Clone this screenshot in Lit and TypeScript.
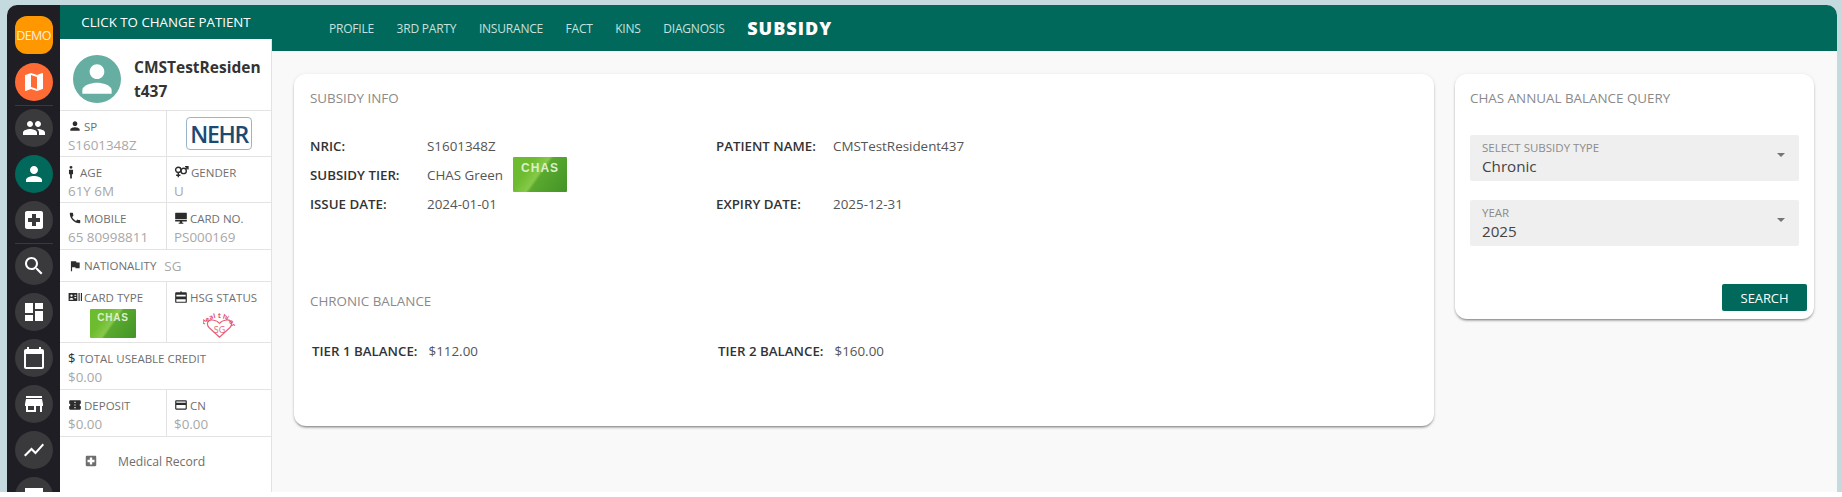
import { LitElement, html, css, svg } from "lit";
import { customElement } from "lit/decorators.js";

const P: Record<string, string> = {
  map: "M20.5 3l-.16.03L15 5.1 9 3 3.36 4.9c-.21.07-.36.25-.36.48V20.5c0 .28.22.5.5.5l.16-.03L9 18.9l6 2.1 5.64-1.9c.21-.07.36-.25.36-.48V3.5c0-.28-.22-.5-.5-.5zM15 19l-6-2.11V5l6 2.11V19z",
  people: "M16 11c1.66 0 2.99-1.34 2.99-3S17.66 5 16 5c-1.66 0-3 1.34-3 3s1.34 3 3 3zm-8 0c1.66 0 2.99-1.34 2.99-3S9.66 5 8 5C6.34 5 5 6.34 5 8s1.34 3 3 3zm0 2c-2.33 0-7 1.17-7 3.5V19h14v-2.5c0-2.33-4.67-3.5-7-3.5zm8 0c-.29 0-.62.02-.97.05 1.16.84 1.97 1.97 1.97 3.45V19h6v-2.5c0-2.33-4.67-3.5-7-3.5z",
  person: "M12 12c2.21 0 4-1.79 4-4s-1.79-4-4-4-4 1.79-4 4 1.79 4 4 4zm0 2c-2.67 0-8 1.34-8 4v2h16v-2c0-2.66-5.33-4-8-4z",
  hospital: "M19 3H5c-1.1 0-1.99.9-1.99 2L3 19c0 1.1.9 2 2 2h14c1.1 0 2-.9 2-2V5c0-1.1-.9-2-2-2zm-1 11h-4v4h-4v-4H6v-4h4V6h4v4h4v4z",
  search: "M15.5 14h-.79l-.28-.27C15.41 12.59 16 11.11 16 9.5 16 5.91 13.09 3 9.5 3S3 5.91 3 9.5 5.91 16 9.5 16c1.61 0 3.09-.59 4.23-1.57l.27.28v.79l5 4.99L20.49 19l-4.99-5zm-6 0C7.01 14 5 11.99 5 9.5S7.01 5 9.5 5 14 7.01 14 9.5 11.99 14 9.5 14z",
  dashboard: "M3 13h8V3H3v10zm0 8h8v-6H3v6zm10 0h8V11h-8v10zm0-18v6h8V3h-8z",
  calendar: "M20 3h-1V1h-2v2H7V1H5v2H4c-1.1 0-2 .9-2 2v16c0 1.1.9 2 2 2h16c1.1 0 2-.9 2-2V5c0-1.1-.9-2-2-2zm0 18H4V8h16v13z",
  store: "M20 4H4v2h16V4zm1 10v-2l-1-5H4l-1 5v2h1v6h10v-6h4v6h2v-6h1zm-9 4H6v-4h6v4z",
  chart: "M3.5 18.49l6-6.01 4 4L22 6.92l-1.41-1.41-7.09 7.97-4-4L2 16.99z",
  receipt: "M3 4h18v16H3zM5 8v10h14V8z",
  call: "M20.01 15.38c-1.23 0-2.42-.2-3.53-.56-.35-.12-.74-.03-1.01.24l-1.57 1.97c-2.83-1.35-5.48-3.9-6.89-6.83l1.95-1.66c.27-.28.35-.67.24-1.02-.37-1.11-.56-2.3-.56-3.53 0-.54-.45-.99-.99-.99H4.19C3.65 3 3 3.24 3 3.99 3 13.28 10.73 21 20.01 21c.71 0 .99-.63.99-1.18v-3.45c0-.54-.45-.99-.99-.99z",
  flag: "M14.4 6L14 4H5v17h2v-7h5.6l.4 2h7V6z",
  ticket: "M22 10V6c0-1.11-.9-2-2-2H4c-1.1 0-1.99.89-1.99 2v4c1.1 0 1.99.9 1.99 2s-.89 2-2 2v4c0 1.1.9 2 2 2h16c1.1 0 2-.9 2-2v-4c-1.1 0-2-.9-2-2s.9-2 2-2zm-9 7.5h-2v-2h2v2zm0-4.5h-2v-2h2v2zm0-4.5h-2v-2h2v2z",
  cn: "M20 4H4c-1.11 0-1.99.89-1.99 2L2 18c0 1.11.89 2 2 2h16c1.11 0 2-.89 2-2V6c0-1.11-.89-2-2-2zm0 14H4v-6h16v6zm0-10H4V6h16v2z",
  desktop: "M3 3h18c.6 0 1 .4 1 1v10H2V4c0-.6.4-1 1-1zM2 15.500h20V18H14v2h2v2H8v-2h2v-2H2z",
  age: "M12 1.500a2.500 2.500 0 1 1 0 5 2.500 2.500 0 0 1 0-5zM8.500 8h7v8h-2v7h-3v-7h-2z",
  cardtype: "M1 5h15v14H1zM6 7.500a2 2 0 1 0 0 4 2 2 0 0 0 0-4zM3 16.500h6v-1.200c0-1-2-1.800-3-1.800s-3 .8-3 1.800zM11 8v2h3V8zm0 4v2h3v-2zM18 5h2v14h-2zM22 5h2v14h-2z",
  hsg: "M11 2h2v2h7a2 2 0 0 1 2 2v14a2 2 0 0 1-2 2H4a2 2 0 0 1-2-2V6c0-1.100.9-2 2-2h7zM4 8v3h16V8zm0 8v4h16v-4z",
};

const icon = (n: string, cls = "") =>
  html`<svg class=${cls} viewBox="0 0 24 24"><path d=${P[n]} fill-rule="evenodd"></path></svg>`;

const genderIcon = svg`<svg class="wide" viewBox="0 0 28 24">
  <g fill="none" stroke="currentColor" stroke-width="2.600">
    <circle cx="8" cy="8" r="5"></circle>
    <path d="M8 13v9M4 18h8"></path>
    <circle cx="18" cy="10" r="5"></circle>
    <path d="M21.500 6.500L26 2M20.500 2H26V7.500"></path>
  </g>
</svg>`;

const chas = (big: boolean) => html`<div class="chas ${big ? "big" : ""}">CHAS</div>`;

const healthier = svg`
  <svg class="hsg-logo" viewBox="0 0 33 26">
    <path d="M16.500 25.200 L6 15.500 C2.500 11.500 5.500 7.500 9.500 8 C12 8.300 15 9.500 16.500 11.500 C18 9.500 21 8.300 23.500 8 C27.500 7.500 30.500 11.500 27 15.500 Z" fill="#fff" stroke="#e8607a" stroke-width="1.200"></path>
    <text x="16.500" y="20.500" text-anchor="middle" font-size="9" fill="#e8607a" font-family="'Open Sans',sans-serif">SG</text>
    <text
      x="1.500 4.400 7.500 10.900 15 19.500 22.500 25.500 27.800"
      y="13 10.400 8 6.500 6 6.200 7.500 10 13"
      rotate="-60 -45 -30 -15 0 15 30 45 60"
      font-size="6.500"
      font-weight="700"
      fill="#e0506e"
      font-family="'Open Sans',sans-serif"
    >Healthier</text>
  </svg>`;

@customElement("app-root")
export class AppRoot extends LitElement {
  static styles = css`
    :host {
      display: block;
      height: 497px;
      overflow: hidden;
      background: #fff;
      font-family: "Open Sans", sans-serif;
    }
    .backdrop {
      height: 492px;
      background: #c4dadf;
      padding: 5px 5px 0 7px;
      box-sizing: border-box;
    }
    .frame {
      height: 487px;
      display: flex;
      border-radius: 10px 10px 0 0;
      overflow: hidden;
      background: #f9f9f9;
    }
    svg { fill: currentColor; display: block; }

    .rail {
      width: 53px;
      flex: none;
      background: #1e1e24;
      display: flex;
      flex-direction: column;
      align-items: center;
      padding-top: 11px;
      box-sizing: border-box;
      overflow: hidden;
    }
    .rb {
      width: 38px;
      height: 38px;
      flex: none;
      border-radius: 50%;
      background: #3a3a3d;
      color: #fff;
      display: flex;
      align-items: center;
      justify-content: center;
      margin-bottom: 8px;
    }
    .rb svg { width: 24px; height: 24px; }
    .rb.demo {
      border-radius: 12px;
      background: #ff9800;
      font-size: 12.500px;
      letter-spacing: -0.6px;
      color: #ffeed8;
      margin-bottom: 9px;
    }
    .rb.orange { background: #ff6b35; }
    .rb.green { background: #00695c; }
    .sep { width: 38px; height: 1px; background: #3a3a3d; margin: -4px 0 3px; flex: none; }

    .panel {
      width: 211px;
      flex: none;
      background: #fff;
      border-right: 1px solid #e3e3e3;
      display: flex;
      flex-direction: column;
      color: #8f8f8f;
    }
    .change {
      height: 34px;
      flex: none;
      margin-right: -1px;
      background: #00695c;
      color: #fff;
      font-size: 13.300px;
      display: flex;
      align-items: center;
      justify-content: center;
    }
    .who {
      height: 72px;
      flex: none;
      display: flex;
      align-items: center;
      gap: 13px;
      padding: 8px 0 0 13px;
      box-sizing: border-box;
      border-bottom: 1px solid #e3e3e3;
    }
    .avatar {
      width: 48px;
      height: 48px;
      flex: none;
      border-radius: 50%;
      background: #66ada2;
      color: #fff;
      display: flex;
      align-items: center;
      justify-content: center;
    }
    .avatar svg { width: 44px; height: 44px; }
    .name {
      width: 128px;
      word-break: break-all;
      font-weight: 700;
      font-size: 15.500px;
      line-height: 24px;
      color: #333;
    }
    .row {
      display: flex;
      flex: none;
      border-bottom: 1px solid #e3e3e3;
      box-sizing: border-box;
    }
    .r46 { height: 46px; }
    .r47 { height: 47px; }
    .r32 { height: 32px; }
    .r61 { height: 61px; }
    .cell {
      flex: 1 1 0;
      min-width: 0;
      padding: 6px 0 0 7px;
      box-sizing: border-box;
      white-space: nowrap;
    }
    .cell.first { flex: none; width: 107px; padding-left: 8px; border-right: 1px solid #e3e3e3; }
    .cell.wide-cell { padding-left: 8px; }
    .cell.center { padding: 0; display: flex; align-items: center; justify-content: center; }
    .lab {
      display: flex;
      align-items: center;
      gap: 2px;
      height: 18px;
      font-size: 11.500px;
      color: #6f6f6f;
    }
    .lab svg { width: 14px; height: 14px; color: #2c2c2c; flex: none; }
    .lab svg.wide { width: 15px; margin-right: 0; }
    .lab svg.narrow { margin: 0 0.500px 0 -4.500px; }
    .val { font-size: 13.400px; line-height: 18px; margin-top: 1px; color: #a8a8a8; }
    .nat { display: flex; align-items: center; padding-left: 8px; gap: 8px; }
    .nat .val { margin-top: 1px; }
    .dollar { color: #2c2c2c; font-size: 13px; margin-right: 1px; }
    .nehr {
      width: 66px;
      height: 33px;
      border: 1px solid #9bb5c8;
      border-radius: 4px;
      box-sizing: border-box;
      color: #1d4a72;
      font-size: 23px;
      font-weight: 600;
      letter-spacing: -1.300px;
      display: flex;
      align-items: center;
      justify-content: center;
    }
    .chas {
      width: 46px;
      height: 29px;
      border-radius: 1px;
      background: linear-gradient(125deg, #6dbb2e 0 28%, #86c94a 47%, #5aa82e 52%, #429428 100%);
      color: #dcefcc;
      font-size: 10px;
      font-weight: 700;
      font-family: "Liberation Sans", sans-serif;
      letter-spacing: 0.8px;
      text-align: center;
      line-height: 18px;
      box-sizing: border-box;
      flex: none;
    }
    .chas.big { width: 54px; height: 35px; line-height: 22px; font-size: 12px; letter-spacing: 1px; }
    .logo-cell { display: flex; justify-content: center; margin-top: 3px; padding-right: 7px; }
    .cell.first .logo-cell { padding-right: 8px; }
    .hsg-logo { width: 33px; height: 26px; margin-top: 3px; }
    .med {
      display: flex;
      align-items: center;
      height: 48px;
      flex: none;
      padding-left: 24px;
      gap: 20px;
      font-size: 12.200px;
      color: #6e6e6e;
    }
    .med svg { width: 14px; height: 14px; }

    .main { flex: 1; min-width: 0; display: flex; flex-direction: column; }
    .bar {
      height: 46px;
      flex: none;
      background: #00695c;
      display: flex;
      align-items: center;
      padding-left: 57px;
      gap: 22.500px;
      color: #c9e0dc;
      font-size: 12px;
      letter-spacing: -0.2px;
    }
    .bar .on { color: #fff; font-weight: 800; font-size: 18px; letter-spacing: 1px; }
    .content {
      flex: 1;
      min-height: 0;
      display: flex;
      align-items: flex-start;
      gap: 21px;
      padding: 23px 23px 0 22px;
    }
    .card {
      background: #fff;
      border-radius: 12px;
      box-sizing: border-box;
      box-shadow: 0 2px 3px -1px rgba(0, 0, 0, 0.55), 0 0 4px rgba(0, 0, 0, 0.06);
    }
    .info { flex: 1; min-width: 0; height: 352px; padding: 15px 16px 0; }
    .query { width: 359px; height: 245px; flex: none; padding: 15px 15px 0; }
    .title { font-size: 13.400px; line-height: 18px; color: #8a8a8a; }
    .facts {
      margin-top: 24px;
      display: grid;
      grid-template-columns: 117px 289px 117px 1fr;
      grid-auto-rows: 29px;
      align-items: center;
      font-size: 13.400px;
      color: #555;
    }
    .facts b, .bal b { font-weight: 600; color: #333; font-size: 13.300px; }
    .tier { display: flex; align-items: center; gap: 10px; height: 35px; }
    .title.second { margin-top: 74px; }
    .bal {
      margin-top: 32px;
      padding-left: 2px;
      display: grid;
      grid-template-columns: 406px 1fr;
      font-size: 13.400px;
      line-height: 18px;
      color: #555;
    }
    .bal span span { margin-left: 11px; }
    .select {
      height: 46px;
      background: #efefef;
      border-radius: 2px;
      margin-top: 19px;
      padding: 6px 12px 0;
      box-sizing: border-box;
      display: flex;
      justify-content: space-between;
    }
    .select.top { margin-top: 28px; }
    .select .l { font-size: 11.500px; line-height: 14px; color: #8b8b8b; }
    .select .v { font-size: 15.200px; line-height: 20px; margin-top: 1px; color: #444; }
    .caret {
      width: 0;
      height: 0;
      margin: 12px 2px 0 0;
      border-left: 4px solid transparent;
      border-right: 4px solid transparent;
      border-top: 4px solid #757575;
    }
    .actions { display: flex; justify-content: flex-end; margin: 38px -8px 0 0; }
    button {
      width: 85px;
      height: 27px;
      border: 0;
      border-radius: 2px;
      background: #00695c;
      color: #fff;
      font: 13px "Open Sans", sans-serif;
      letter-spacing: -0.1px;
      padding: 0;
    }
  `;

  private rail() {
    const a = ["search", "dashboard", "calendar", "store", "chart", "receipt"];
    return html`<nav class="rail">
      <div class="rb demo">DEMO</div>
      <div class="rb orange">${icon("map")}</div>
      <div class="sep"></div>
      <div class="rb">${icon("people")}</div>
      <div class="rb green">${icon("person")}</div>
      <div class="rb">${icon("hospital")}</div>
      <div class="sep"></div>
      ${a.map((n) => html`<div class="rb">${icon(n)}</div>`)}
    </nav>`;
  }

  private cell(ic: unknown, label: string, value: string, first = false) {
    return html`<div class="cell ${first ? "first" : ""}">
      <div class="lab">${ic}<span>${label}</span></div>
      <div class="val">${value}</div>
    </div>`;
  }

  private panel() {
    return html`<aside class="panel">
      <div class="change">CLICK TO CHANGE PATIENT</div>
      <div class="who">
        <div class="avatar">${icon("person")}</div>
        <div class="name">CMSTestResident437</div>
      </div>
      <div class="row r46">
        ${this.cell(icon("person"), "SP", "S1601348Z", true)}
        <div class="cell center"><div class="nehr">NEHR</div></div>
      </div>
      <div class="row r46">
        ${this.cell(icon("age", "narrow"), "AGE", "61Y 6M", true)}
        ${this.cell(genderIcon, "GENDER", "U")}
      </div>
      <div class="row r47">
        ${this.cell(icon("call"), "MOBILE", "65 80998811", true)}
        ${this.cell(icon("desktop"), "CARD NO.", "PS000169")}
      </div>
      <div class="row r32 nat">
        <div class="lab">${icon("flag")}<span>NATIONALITY</span></div>
        <div class="val">SG</div>
      </div>
      <div class="row r61">
        <div class="cell first">
          <div class="lab">${icon("cardtype")}<span>CARD TYPE</span></div>
          <div class="logo-cell">${chas(false)}</div>
        </div>
        <div class="cell">
          <div class="lab">${icon("hsg")}<span>HSG STATUS</span></div>
          <div class="logo-cell">${healthier}</div>
        </div>
      </div>
      <div class="row r47">
        <div class="cell wide-cell">
          <div class="lab"><span class="dollar">$</span><span>TOTAL USEABLE CREDIT</span></div>
          <div class="val">$0.00</div>
        </div>
      </div>
      <div class="row r47">
        ${this.cell(icon("ticket"), "DEPOSIT", "$0.00", true)}
        ${this.cell(icon("cn"), "CN", "$0.00")}
      </div>
      <div class="med">${icon("hospital")}<span>Medical Record</span></div>
    </aside>`;
  }

  render() {
    return html`<div class="backdrop">
      <div class="frame">
        ${this.rail()}
        ${this.panel()}
        <div class="main">
          <header class="bar">
            <span>PROFILE</span><span>3RD PARTY</span><span>INSURANCE</span><span>FACT</span
            ><span>KINS</span><span>DIAGNOSIS</span><span class="on">SUBSIDY</span>
          </header>
          <div class="content">
            <section class="card info">
              <div class="title">SUBSIDY INFO</div>
              <div class="facts">
                <b>NRIC:</b><span>S1601348Z</span><b>PATIENT NAME:</b><span>CMSTestResident437</span>
                <b>SUBSIDY TIER:</b><div class="tier"><span>CHAS Green</span>${chas(true)}</div><span></span><span></span>
                <b>ISSUE DATE:</b><span>2024-01-01</span><b>EXPIRY DATE:</b><span>2025-12-31</span>
              </div>
              <div class="title second">CHRONIC BALANCE</div>
              <div class="bal">
                <span><b>TIER 1 BALANCE:</b><span>$112.00</span></span>
                <span><b>TIER 2 BALANCE:</b><span>$160.00</span></span>
              </div>
            </section>
            <section class="card query">
              <div class="title">CHAS ANNUAL BALANCE QUERY</div>
              <div class="select top">
                <div><div class="l">SELECT SUBSIDY TYPE</div><div class="v">Chronic</div></div>
                <div class="caret"></div>
              </div>
              <div class="select">
                <div><div class="l">YEAR</div><div class="v">2025</div></div>
                <div class="caret"></div>
              </div>
              <div class="actions"><button>SEARCH</button></div>
            </section>
          </div>
        </div>
      </div>
    </div>`;
  }
}
